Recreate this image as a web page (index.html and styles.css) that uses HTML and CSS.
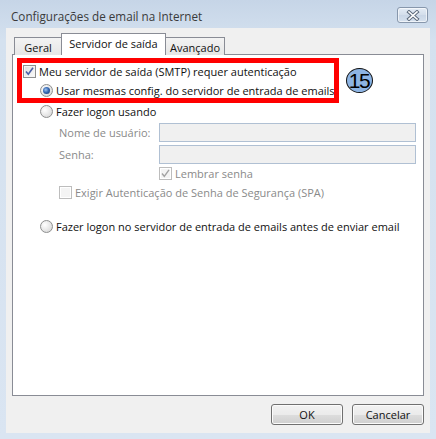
FILE: index.html
```html
<!DOCTYPE html>
<html lang="pt">
<head>
<meta charset="utf-8">
<title>Configurações de email na Internet</title>
<link rel="stylesheet" href="styles.css">
</head>
<body>
<div class="window">
  <div class="titlebar">
    <span class="title">Configurações de email na Internet</span>
    <button class="close" aria-label="Fechar">
      <svg width="14" height="11" viewBox="0 0 14 11">
        <path d="M3 2 L11 9 M11 2 L3 9" stroke="#5d6b7d" stroke-width="3.6" stroke-linecap="square" fill="none"/>
        <path d="M3 2 L11 9 M11 2 L3 9" stroke="#ffffff" stroke-width="1.6" stroke-linecap="square" fill="none"/>
      </svg>
    </button>
  </div>
  <div class="client">
    <div class="tabs">
      <div class="tab tab-geral">Geral</div>
      <div class="tab tab-active">Servidor de saída</div>
      <div class="tab tab-avancado">Avançado</div>
    </div>
    <div class="panel">
      <div class="row row-1">
        <span class="cb checked"><svg width="11" height="11" viewBox="0 0 11 11"><path d="M2 5.5 L4.3 8.3 L9 1.8" stroke="#4a60a6" stroke-width="1.6" fill="none"/></svg></span>
        <span class="lbl">Meu servidor de saída (SMTP) requer autenticação</span>
      </div>
      <div class="row row-2">
        <span class="radio selected"><span class="dot"></span></span>
        <span class="lbl">Usar mesmas config. do servidor de entrada de emails</span>
      </div>
      <div class="row row-3">
        <span class="radio"></span>
        <span class="lbl">Fazer logon usando</span>
      </div>
      <div class="field field-1">
        <span class="flabel">Nome de usuário:</span>
        <span class="input"></span>
      </div>
      <div class="field field-2">
        <span class="flabel">Senha:</span>
        <span class="input"></span>
      </div>
      <div class="row row-lembrar">
        <span class="cb disabled"><svg width="11" height="11" viewBox="0 0 11 11"><path d="M2 5.5 L4.3 8.3 L9 1.8" stroke="#a3a3a3" stroke-width="1.4" fill="none"/></svg></span>
        <span class="lbl dim">Lembrar senha</span>
      </div>
      <div class="row row-spa">
        <span class="cb disabled"></span>
        <span class="lbl dim">Exigir Autenticação de Senha de Segurança (SPA)</span>
      </div>
      <div class="row row-last">
        <span class="radio"></span>
        <span class="lbl">Fazer logon no servidor de entrada de emails antes de enviar email</span>
      </div>
      <div class="highlight"></div>
      <div class="badge">15</div>
    </div>
    <div class="buttons">
      <button class="btn">OK</button>
      <button class="btn">Cancelar</button>
    </div>
  </div>
</div>
</body>
</html>
```
FILE: styles.css
```css
html, body {
  margin: 0;
  padding: 0;
}
body {
  font-family: "Open Sans", "Noto Sans", sans-serif;
  font-size: 11px;
  color: #111111;
}
.window {
  width: 436px;
  height: 439px;
  box-sizing: border-box;
  background: linear-gradient(#c6d5e7 0px, #d4e1ef 40px, #dae5f2 100%);
  display: flex;
  flex-direction: column;
  padding: 0 6px 6px 6px;
}
.titlebar {
  height: 28px;
  display: flex;
  align-items: center;
  justify-content: space-between;
  padding-left: 5px;
  box-sizing: border-box;
  padding-top: 3px;
}
.title {
  font-size: 11.7px;
  color: #3a3a3a;
}
.close {
  width: 31px;
  height: 16px;
  margin-right: 2px;
  margin-top: -1px;
  padding: 0;
  border: 1px solid #8797ac;
  border-radius: 3px;
  background: linear-gradient(#e4ecf5, #d3deeb 50%, #c9d6e6 51%, #d6e1ee);
  box-shadow: inset 0 0 0 1px rgba(255,255,255,0.6);
  display: flex;
  align-items: center;
  justify-content: center;
}
.close svg {
  display: block;
}
.client {
  flex: 1;
  background: #f0f0f0;
  display: flex;
  flex-direction: column;
  padding: 6px 6px 8px 6px;
}
.tabs {
  display: flex;
  align-items: flex-end;
  height: 21px;
  padding-left: 2px;
  margin-bottom: -1px;
  position: relative;
  z-index: 1;
}
.tab {
  box-sizing: border-box;
  height: 18px;
  border: 1px solid #898c95;
  border-bottom: none;
  background: linear-gradient(#f3f3f3, #e6e6e6);
  display: flex;
  align-items: center;
  justify-content: center;
  color: #111111;
  padding-top: 2px;
}
.tab-geral {
  width: 47px;
  border-right: none;
}
.tab-active {
  width: 105px;
  height: 22px;
  background: #ffffff;
  padding-top: 0;
  padding-bottom: 3px;
}
.tab-avancado {
  width: 59px;
  border-left: none;
}
.panel {
  flex: 1;
  background: #ffffff;
  border: 1px solid #898c95;
  position: relative;
  padding-top: 7px;
}
.row {
  height: 19px;
  display: flex;
  align-items: center;
  gap: 3px;
}
.row-1 { padding-left: 10px; }
.row-2 { padding-left: 27px; }
.row-3 { padding-left: 27px; margin-top: 2px; }
.row-lembrar { padding-left: 146px; }
.row-spa { padding-left: 46px; }
.row-last { padding-left: 27px; margin-top: 15px; }
.lbl.dim { color: #8a8a8a; }
.cb {
  box-sizing: border-box;
  width: 13px;
  height: 13px;
  border: 1px solid #8e8f8f;
  background: linear-gradient(135deg, #dcdcdc, #fbfbfb);
  box-shadow: inset 0 0 0 1px #f4f4f4;
  display: flex;
  align-items: center;
  justify-content: center;
  flex: none;
}
.cb.disabled {
  border-color: #bdbdbd;
  background: #f4f4f4;
  box-shadow: inset 0 0 0 1px #ffffff;
}
.cb svg { display: block; }
.radio {
  box-sizing: border-box;
  width: 13px;
  height: 13px;
  border-radius: 50%;
  border: 1px solid #8e8f8f;
  background: radial-gradient(circle at 35% 35%, #ffffff 0, #e6e6e6 55%, #cfcfcf 100%);
  display: flex;
  align-items: center;
  justify-content: center;
  flex: none;
}
.radio .dot {
  width: 7px;
  height: 7px;
  border-radius: 50%;
  background: radial-gradient(circle at 40% 40%, #9fc3ef 0, #3a6cb5 45%, #102f66 100%);
}
.field {
  display: flex;
  align-items: center;
  height: 19px;
  padding-left: 46px;
}
.field-1 { margin-top: 2px; }
.field-2 { margin-top: 3px; }
.flabel {
  width: 100px;
  color: #8a8a8a;
}
.input {
  box-sizing: border-box;
  width: 257px;
  height: 19px;
  background: #f0f0f0;
  border: 1px solid #b0c0d3;
}
.highlight {
  position: absolute;
  left: 4px;
  top: 3px;
  width: 322px;
  height: 45px;
  box-sizing: border-box;
  border: 5px solid #ff0000;
}
.badge {
  position: absolute;
  left: 333px;
  top: 13px;
  width: 27px;
  height: 25px;
  box-sizing: border-box;
  border-radius: 50%;
  border: 1px solid #111111;
  background: #8db4e3;
  color: #000000;
  font-family: "Liberation Sans", Arial, sans-serif;
  font-size: 21px;
  letter-spacing: -1.5px;
  line-height: 23px;
  text-align: center;
  text-indent: -1px;
}
.buttons {
  display: flex;
  justify-content: flex-end;
  gap: 9px;
  margin-top: 8px;
}
.btn {
  width: 72px;
  height: 21px;
  padding: 0;
  border: 1px solid #707070;
  border-radius: 3px;
  background: linear-gradient(#f2f2f2 0%, #ebebeb 50%, #dddddd 51%, #cfcfcf 100%);
  box-shadow: inset 0 0 0 1px #fbfbfb;
  font-family: "Open Sans", "Noto Sans", sans-serif;
  font-size: 11px;
  color: #111111;
}
```
